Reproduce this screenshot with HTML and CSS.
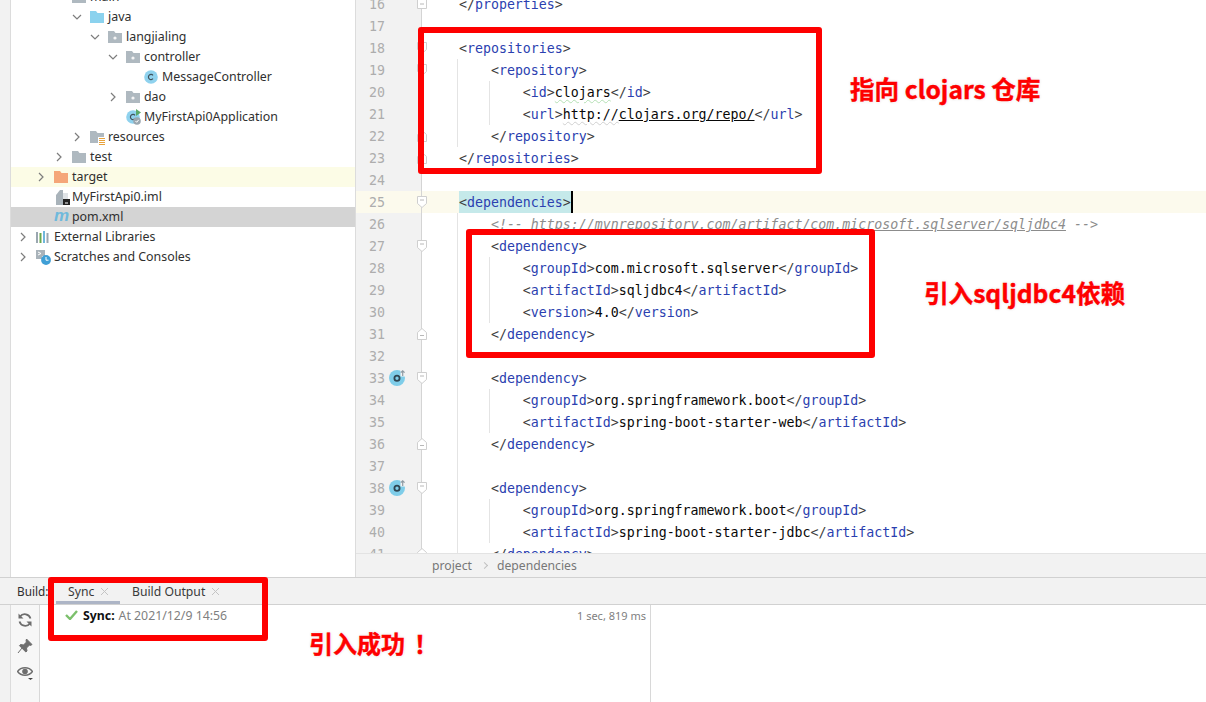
FILE: index.html
```html
<!DOCTYPE html>
<html lang="zh">
<head>
<meta charset="utf-8">
<title>pom.xml</title>
<link rel="stylesheet" href="styles.css">
</head>
<body>
<svg class="sprite" width="0" height="0">
  <symbol id="down" viewBox="0 0 10 10"><path d="M1 3l4 4 4-4" fill="none" stroke="#7d7d7d" stroke-width="1.2"/></symbol>
  <symbol id="right" viewBox="0 0 10 10"><path d="M3 1l4 4-4 4" fill="none" stroke="#7d7d7d" stroke-width="1.2"/></symbol>
  <symbol id="folder" viewBox="0 0 14 12"><path d="M0 0h6l1.500 2H14v10H0z" fill="#afb9c0"/></symbol>
  <symbol id="pkg" viewBox="0 0 14 12"><path d="M0 0h6l1.500 2H14v10H0z" fill="#afb9c0"/><circle cx="7" cy="7" r="1.600" fill="#f5f5f5"/></symbol>
  <symbol id="java" viewBox="0 0 14 12"><path d="M0 0h6l1.500 2H14v10H0z" fill="#8bd2ee"/></symbol>
  <symbol id="orange" viewBox="0 0 14 12"><path d="M0 0h6l1.500 2H14v10H0z" fill="#f5a679"/></symbol>
  <symbol id="res" viewBox="0 0 15 15"><path d="M0 0h6l1.500 2H14v4H8v6H0z" fill="#afb9c0"/><path d="M9 7.500h6M9 9.500h6M9 11.500h6M9 13.500h6" stroke="#e8a33d" stroke-width="1"/></symbol>
  <symbol id="cls" viewBox="0 0 14 14"><circle cx="7" cy="7" r="6.800" fill="#8fd2ee"/><path d="M9 5.300A2.600 2.600 0 1 0 9 8.700" fill="none" stroke="#40525c" stroke-width="1.200"/></symbol>
  <symbol id="app" viewBox="0 0 16 16"><circle cx="7" cy="8" r="6.800" fill="#8fd2ee"/><path d="M9 6.300A2.600 2.600 0 1 0 9 9.700" fill="none" stroke="#40525c" stroke-width="1.200"/><path d="M10 0l5 3.500-5 3.500z" fill="#59a869"/><circle cx="11" cy="12" r="3.800" fill="#9aa7b0"/><path d="M9.500 12l1.200 1.300 2-2.500" fill="none" stroke="#fff"/></symbol>
  <symbol id="iml" viewBox="0 0 14 15"><path d="M0 5l4-5h3v15H0z" fill="#a9b3ba"/><path d="M7 3h5v7H7z" fill="#dfe3e6"/><path d="M7 9h7v6H7z" fill="#222"/><path d="M9 13h3" stroke="#fff"/></symbol>
  <symbol id="libs" viewBox="0 0 14 12"><path d="M1 1v11" stroke="#9aa7b0" stroke-width="2"/><path d="M4.500 2v10" stroke="#6aa84f" stroke-width="2"/><path d="M8 0v12" stroke="#6fb7dc" stroke-width="2"/><path d="M11.500 2v10" stroke="#9aa7b0" stroke-width="2"/></symbol>
  <symbol id="scr" viewBox="0 0 15 15"><path d="M0 0h9v6H6v3H0z" fill="#a9b3ba"/><path d="M2 2l3 1.500L2 5" fill="none" stroke="#fff"/><circle cx="10" cy="10" r="4.900" fill="#3f9fd6"/><path d="M10 7v3.200h2.500" fill="none" stroke="#fff"/></symbol>
  <symbol id="fopen" viewBox="0 0 10 12"><path d="M.5.500h9v7l-4.500 4-4.500-4z" fill="#fff" stroke="#cfcfcf"/><path d="M3 4h4" stroke="#b8b8b8"/></symbol>
  <symbol id="fclose" viewBox="0 0 10 12"><path d="M.5 11.500h9v-7L5 .5l-4.500 4z" fill="#fff" stroke="#cfcfcf"/><path d="M3 7.500h4" stroke="#b8b8b8"/></symbol>
  <symbol id="fsq" viewBox="0 0 10 10"><path d="M.5.500h9v9h-9z" fill="#fff" stroke="#cfcfcf"/><path d="M3 5h4" stroke="#b8b8b8"/></symbol>
  <symbol id="over" viewBox="0 0 16 16"><circle cx="8" cy="8" r="8" fill="#7fcde9"/><path d="M11.500 0H16v6.500h-4.500z" fill="#f2f2f2"/><circle cx="8" cy="8.300" r="2.600" fill="none" stroke="#2f4653" stroke-width="1.800"/><path d="M13.700 6V.8M11.800 2.700l1.900-1.900 1.900 1.900" fill="none" stroke="#8f9ba3" stroke-width="1.200"/></symbol>
  <symbol id="x" viewBox="0 0 9 9"><path d="M1 1l7 7M8 1L1 8" stroke="#c4c4c4" stroke-width="1"/></symbol>
</svg>

<div class="app">
  <div class="main">
    <div class="strip"></div>

    <nav class="tree">
      <div class="row d3"><i class="chev"><svg><use href="#down"/></svg></i><svg class="ic"><use href="#folder"/></svg><span>main</span></div>
      <div class="row d4"><i class="chev"><svg><use href="#down"/></svg></i><svg class="ic"><use href="#java"/></svg><span>java</span></div>
      <div class="row d5"><i class="chev"><svg><use href="#down"/></svg></i><svg class="ic"><use href="#pkg"/></svg><span>langjialing</span></div>
      <div class="row d6"><i class="chev"><svg><use href="#down"/></svg></i><svg class="ic"><use href="#pkg"/></svg><span>controller</span></div>
      <div class="row d7"><i class="chev"></i><svg class="ic ic-round"><use href="#cls"/></svg><span>MessageController</span></div>
      <div class="row d6"><i class="chev"><svg><use href="#right"/></svg></i><svg class="ic"><use href="#pkg"/></svg><span>dao</span></div>
      <div class="row d6"><i class="chev"></i><svg class="ic ic-app"><use href="#app"/></svg><span>MyFirstApi0Application</span></div>
      <div class="row d4"><i class="chev"><svg><use href="#right"/></svg></i><svg class="ic ic-res"><use href="#res"/></svg><span>resources</span></div>
      <div class="row d3"><i class="chev"><svg><use href="#right"/></svg></i><svg class="ic"><use href="#folder"/></svg><span>test</span></div>
      <div class="row d2 excluded"><i class="chev"><svg><use href="#right"/></svg></i><svg class="ic"><use href="#orange"/></svg><span>target</span></div>
      <div class="row d2"><i class="chev"></i><svg class="ic ic-iml"><use href="#iml"/></svg><span>MyFirstApi0.iml</span></div>
      <div class="row d2 selected"><i class="chev"></i><i class="ic-m">m</i><span>pom.xml</span></div>
      <div class="row d1"><i class="chev"><svg><use href="#right"/></svg></i><svg class="ic"><use href="#libs"/></svg><span>External Libraries</span></div>
      <div class="row d1"><i class="chev"><svg><use href="#right"/></svg></i><svg class="ic ic-scr"><use href="#scr"/></svg><span>Scratches and Consoles</span></div>
    </nav>

    <section class="editor">
      <div class="lines">
        <div class="line"><div class="gut">16<svg class="fold fold-sq"><use href="#fsq"/></svg></div><code class="code">    <b>&lt;/</b><em>properties</em><b>&gt;</b></code></div>
        <div class="line"><div class="gut">17</div><code class="code"></code></div>
        <div class="line"><div class="gut">18<svg class="fold"><use href="#fopen"/></svg></div><code class="code">    <b>&lt;</b><em>repositories</em><b>&gt;</b></code></div>
        <div class="line"><div class="gut">19<svg class="fold"><use href="#fopen"/></svg></div><code class="code g1">        <b>&lt;</b><em>repository</em><b>&gt;</b></code></div>
        <div class="line"><div class="gut">20</div><code class="code g2">            <b>&lt;</b><em>id</em><b>&gt;</b><span class="typo">clojars</span><b>&lt;/</b><em>id</em><b>&gt;</b></code></div>
        <div class="line"><div class="gut">21</div><code class="code g2">            <b>&lt;</b><em>url</em><b>&gt;</b><span class="wavy">http://</span><span class="link">clojars.org/repo/</span><b>&lt;/</b><em>url</em><b>&gt;</b></code></div>
        <div class="line"><div class="gut">22<svg class="fold"><use href="#fclose"/></svg></div><code class="code g1">        <b>&lt;/</b><em>repository</em><b>&gt;</b></code></div>
        <div class="line"><div class="gut">23<svg class="fold"><use href="#fclose"/></svg></div><code class="code">    <b>&lt;/</b><em>repositories</em><b>&gt;</b></code></div>
        <div class="line"><div class="gut">24</div><code class="code"></code></div>
        <div class="line current"><div class="gut">25<svg class="fold"><use href="#fopen"/></svg></div><code class="code">    <span class="match"><b>&lt;</b><em>dependencies</em><b>&gt;</b></span><span class="caret"></span></code></div>
        <div class="line"><div class="gut">26</div><code class="code g1 ">        <span class="comment">&lt;!-- <u>https://mvnrepository.com/artifact/com.microsoft.sqlserver/sqljdbc4</u> --&gt;</span></code></div>
        <div class="line"><div class="gut">27<svg class="fold"><use href="#fopen"/></svg></div><code class="code g1">        <b>&lt;</b><em>dependency</em><b>&gt;</b></code></div>
        <div class="line"><div class="gut">28</div><code class="code g2">            <b>&lt;</b><em>groupId</em><b>&gt;</b>com.microsoft.sqlserver<b>&lt;/</b><em>groupId</em><b>&gt;</b></code></div>
        <div class="line"><div class="gut">29</div><code class="code g2">            <b>&lt;</b><em>artifactId</em><b>&gt;</b>sqljdbc4<b>&lt;/</b><em>artifactId</em><b>&gt;</b></code></div>
        <div class="line"><div class="gut">30</div><code class="code g2">            <b>&lt;</b><em>version</em><b>&gt;</b>4.0<b>&lt;/</b><em>version</em><b>&gt;</b></code></div>
        <div class="line"><div class="gut">31<svg class="fold"><use href="#fclose"/></svg></div><code class="code g1">        <b>&lt;/</b><em>dependency</em><b>&gt;</b></code></div>
        <div class="line"><div class="gut">32</div><code class="code g1"></code></div>
        <div class="line"><div class="gut">33<svg class="mark"><use href="#over"/></svg><svg class="fold"><use href="#fopen"/></svg></div><code class="code g1">        <b>&lt;</b><em>dependency</em><b>&gt;</b></code></div>
        <div class="line"><div class="gut">34</div><code class="code g2">            <b>&lt;</b><em>groupId</em><b>&gt;</b>org.springframework.boot<b>&lt;/</b><em>groupId</em><b>&gt;</b></code></div>
        <div class="line"><div class="gut">35</div><code class="code g2">            <b>&lt;</b><em>artifactId</em><b>&gt;</b>spring-boot-starter-web<b>&lt;/</b><em>artifactId</em><b>&gt;</b></code></div>
        <div class="line"><div class="gut">36<svg class="fold"><use href="#fclose"/></svg></div><code class="code g1">        <b>&lt;/</b><em>dependency</em><b>&gt;</b></code></div>
        <div class="line"><div class="gut">37</div><code class="code g1"></code></div>
        <div class="line"><div class="gut">38<svg class="mark"><use href="#over"/></svg><svg class="fold"><use href="#fopen"/></svg></div><code class="code g1">        <b>&lt;</b><em>dependency</em><b>&gt;</b></code></div>
        <div class="line"><div class="gut">39</div><code class="code g2">            <b>&lt;</b><em>groupId</em><b>&gt;</b>org.springframework.boot<b>&lt;/</b><em>groupId</em><b>&gt;</b></code></div>
        <div class="line"><div class="gut">40</div><code class="code g2">            <b>&lt;</b><em>artifactId</em><b>&gt;</b>spring-boot-starter-jdbc<b>&lt;/</b><em>artifactId</em><b>&gt;</b></code></div>
        <div class="line"><div class="gut">41<svg class="fold"><use href="#fclose"/></svg></div><code class="code g1">        <b>&lt;/</b><em>dependency</em><b>&gt;</b></code></div>
      </div>
      <div class="crumbs"><span>project</span><i class="sep"></i><span>dependencies</span></div>
    </section>
  </div>

  <section class="build">
    <header class="tabs">
      <span class="tabs-title">Build:</span>
      <div class="tab active">Sync<svg class="close"><use href="#x"/></svg></div>
      <div class="tab">Build Output<svg class="close"><use href="#x"/></svg></div>
    </header>
    <div class="build-body">
      <div class="strip"></div>
      <div class="tools">
        <svg class="tool" viewBox="0 0 16 16"><path d="M13.500 6.500A6 6 0 0 0 3 4.500M2.500 9.500A6 6 0 0 0 13 11.500" fill="none" stroke="#6e6e6e" stroke-width="1.800"/><path d="M1.500 1.500v5h5zM14.500 14.500v-5h-5z" fill="#6e6e6e"/></svg>
        <svg class="tool" viewBox="0 0 16 16"><path d="M9.500 1l5.500 5.500-1.500 1-1-.5-3 3 .5 3-1.200 1L2.500 7.700l1-1.200 3 .5 3-3-.5-1zM5 10l-4 5" fill="#6e6e6e" stroke="#6e6e6e"/></svg>
        <svg class="tool" viewBox="0 0 16 16"><path d="M.5 7.500C4 2.500 12 2.500 15.500 7.500 12 12.500 4 12.500.5 7.500z" fill="none" stroke="#6e6e6e" stroke-width="1.500"/><circle cx="8" cy="7.500" r="2.800" fill="#6e6e6e"/><path d="M11 14h5l-2.500 2z" fill="#444"/></svg>
      </div>
      <div class="result">
        <div class="result-line">
          <svg class="check" viewBox="0 0 13 10"><path d="M1 5l4 4 7-8" fill="none" stroke="#7cc06c" stroke-width="2.400"/></svg>
          <strong>Sync:</strong><span class="when">At 2021/12/9 14:56</span><span class="dur">1 sec, 819 ms</span>
        </div>
      </div>
      <div class="detail"></div>
    </div>
  </section>

  <div class="box box-repo"></div>
  <div class="box box-dep"></div>
  <div class="box box-sync"></div>
  <div class="note note-repo">指向 clojars 仓库</div>
  <div class="note note-dep">引入sqljdbc4依赖</div>
  <div class="note note-sync">引入成功<span class="bang">！</span></div>
</div>
</body>
</html>
```
FILE: styles.css
```css
* { box-sizing: border-box; }
html, body { margin: 0; padding: 0; background: #fff; }
.sprite { display: block; height: 0; width: 0; }
.app {
  position: relative;
  width: 1206px;
  height: 702px;
  overflow: hidden;
  display: flex;
  flex-direction: column;
  font-family: "Noto Sans", "Noto Sans CJK SC", sans-serif;
  font-size: 12.4px;
  color: #2f2f2f;
}
.main { display: flex; height: 577px; flex: none; }
.strip { width: 11px; flex: none; background: #f2f2f2; border-right: 1px solid #dcdcdc; }

/* project tree */
.tree {
  width: 345px;
  flex: none;
  margin-top: -13px;
  border-right: 1px solid #dcdcdc;
  background: #fff;
}
.row { height: 20px; display: flex; align-items: center; white-space: nowrap; }
.row span { margin-top: -1px; }
.d1 { padding-left: 7px; }
.d2 { padding-left: 25px; }
.d3 { padding-left: 43px; }
.d4 { padding-left: 61px; }
.d5 { padding-left: 79px; }
.d6 { padding-left: 97px; }
.d7 { padding-left: 115px; }
.excluded { background: #fcfce6; }
.selected { background: #d4d4d4; }
.chev { width: 18px; height: 20px; flex: none; display: flex; align-items: center; }
.chev svg { width: 10px; height: 10px; }
.ic { width: 14px; height: 12px; flex: none; margin-right: 4px; }
.ic-round { width: 14px; height: 14px; }
.ic-app { width: 16px; height: 16px; margin-right: 2px; }
.ic-res { width: 15px; height: 15px; margin-right: 3px; margin-top: 2px; }
.ic-iml { width: 14px; height: 15px; margin-left: 2px; margin-right: 2px; }
.ic-scr { width: 15px; height: 15px; margin-right: 3px; }
.ic-m {
  width: 18px;
  flex: none;
  font: italic 700 17px/20px "Liberation Sans", sans-serif;
  color: #6fb9dc;
  margin-top: -3px;
}

/* editor */
.editor { flex: 1; min-width: 0; display: flex; flex-direction: column; overflow: hidden; }
.lines { flex: 1; min-height: 0; overflow: hidden; margin-top: -7px; }
.line { display: flex; height: 22px; }
.gut {
  position: relative;
  width: 66px;
  flex: none;
  padding-left: 13px;
  background: #f2f2f2;
  border-right: 1px solid #d4d4d4;
  color: #adadad;
  font: 13.28px/24px "DejaVu Sans Mono", monospace;
}
.fold { position: absolute; left: 61px; top: 5px; width: 10px; height: 12px; }
.fold-sq { height: 10px; top: 6px; }
.mark { position: absolute; left: 33px; top: 3px; width: 16px; height: 16px; }
.code {
  flex: 1;
  display: block;
  padding-left: 5px;
  white-space: pre;
  color: #080808;
  font: 13.28px/24px "DejaVu Sans Mono", monospace;
  background-repeat: no-repeat;
}
.code b { font-weight: 400; color: #3d3d3d; }
.code em { font-style: normal; color: #2b3fb0; }
.g1 { background-image: linear-gradient(#e4e4e4, #e4e4e4); background-size: 1px 100%; background-position: 35px 0; }
.g2 {
  background-image: linear-gradient(#e4e4e4, #e4e4e4), linear-gradient(#e4e4e4, #e4e4e4);
  background-size: 1px 100%, 1px 100%;
  background-position: 35px 0, 67px 0;
}
.typo { text-decoration: underline wavy #b5e0b5 1px; text-underline-offset: 2px; }
.wavy { text-decoration: underline wavy #d0d0d0 1px; text-underline-offset: 2px; }
.link { text-decoration: underline; }
.comment { color: #8c8c8c; font-style: italic; }
.current .gut { background: #fcfaed; }
.current .code { background: #fcfaed; }
.match { display: inline-block; height: 22px; background: #c5e9ea; vertical-align: top; }
.caret { display: inline-block; width: 2px; height: 22px; background: #000; vertical-align: top; }
.crumbs {
  height: 24px;
  flex: none;
  display: flex;
  align-items: center;
  gap: 10px;
  padding-left: 76px;
  background: #f2f2f2;
  border-top: 1px solid #e3e3e3;
  color: #777;
  font-size: 12.2px;
}
.sep { width: 5px; height: 5px; border-top: 1px solid #c0c0c0; border-right: 1px solid #c0c0c0; transform: rotate(45deg); }

/* build panel */
.build { flex: 1; display: flex; flex-direction: column; border-top: 1px solid #d1d1d1; min-height: 0; }
.tabs {
  height: 27px;
  flex: none;
  display: flex;
  background: #f2f2f2;
  border-bottom: 1px solid #d1d1d1;
  padding-left: 17px;
  line-height: 27px;
  font-size: 12.2px;
}
.tabs-title { width: 39px; flex: none; font-size: 11.8px; }
.tab { position: relative; display: flex; align-items: center; padding: 1px 12px 0; height: 26px; gap: 6px; color: #3a3a3a; }
.tab.active { box-shadow: inset 0 -3px 0 #adb5c6; width: 64px; }
.close { width: 9px; height: 9px; flex: none; }
.build-body { flex: 1; display: flex; min-height: 0; }
.tools {
  width: 29px;
  flex: none;
  display: flex;
  flex-direction: column;
  align-items: center;
  gap: 10px;
  padding-top: 7px;
  background: #f7f7f7;
  border-right: 1px solid #d8d8d8;
}
.tool { width: 16px; height: 16px; }
.result { width: 611px; flex: none; border-right: 1px solid #d8d8d8; padding: 0 4px 0 25px; }
.result-line { display: flex; align-items: center; height: 20px; font-size: 12.3px; }
.check { width: 13px; height: 10px; margin-right: 5px; }
.result-line strong { color: #111; margin-right: 4px; }
.when { color: #808080; }
.dur { margin-left: auto; color: #808080; font-size: 11px; }
.detail { flex: 1; }

/* annotations drawn over the screenshot */
.box { position: absolute; border: 6px solid #fe0000; border-radius: 3px; }
.box-repo { left: 418px; top: 27px; width: 404px; height: 147px; }
.box-dep { left: 466px; top: 229px; width: 409px; height: 129px; }
.box-sync { left: 48px; top: 577px; width: 220px; height: 64px; }
.note {
  position: absolute;
  white-space: nowrap;
  font: 700 24.6px/32px "Noto Sans CJK SC", sans-serif;
  color: #fe0000;
  -webkit-text-stroke: 0.4px #fe0000;
  text-shadow: 0 0 3px #fff, 0 0 3px #fff, 0 0 3px #ccc;
}
.note-repo { left: 850px; top: 72px; }
.note-dep { left: 924px; top: 276px; }
.note-sync { left: 309px; top: 627px; font-size: 24px; }
.bang { margin-left: 9px; }
```
